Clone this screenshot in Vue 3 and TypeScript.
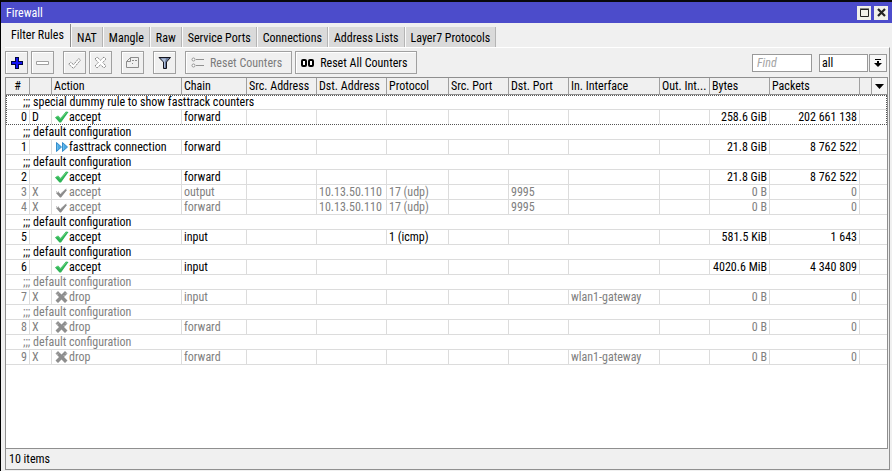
<script setup lang="ts">
import { ref } from 'vue'

interface Column {
  key: string
  label: string
  cls: string
}

interface Rule {
  id: number
  flag?: string
  comment?: string
  action: 'accept' | 'drop' | 'fasttrack connection'
  chain: string
  dst?: string
  protocol?: string
  dstPort?: string
  inIf?: string
  bytes: string
  packets: string
}

const tabs = ['Filter Rules', 'NAT', 'Mangle', 'Raw', 'Service Ports', 'Connections', 'Address Lists', 'Layer7 Protocols']
const activeTab = ref('Filter Rules')
const find = ref('')
const scope = ref('all')
const selected = ref(0)
const scopeSelect = ref<HTMLSelectElement | null>(null)

const columns: Column[] = [
  { key: 'id', label: '#', cls: 'c-id' },
  { key: 'flag', label: '', cls: 'c-flag' },
  { key: 'action', label: 'Action', cls: 'c-action' },
  { key: 'chain', label: 'Chain', cls: 'c-chain' },
  { key: 'src', label: 'Src. Address', cls: 'c-addr' },
  { key: 'dst', label: 'Dst. Address', cls: 'c-addr' },
  { key: 'protocol', label: 'Protocol', cls: 'c-proto' },
  { key: 'srcPort', label: 'Src. Port', cls: 'c-port' },
  { key: 'dstPort', label: 'Dst. Port', cls: 'c-port' },
  { key: 'inIf', label: 'In. Interface', cls: 'c-in' },
  { key: 'outIf', label: 'Out. Int...', cls: 'c-out' },
  { key: 'bytes', label: 'Bytes', cls: 'c-bytes' },
  { key: 'packets', label: 'Packets', cls: 'c-packets' },
  { key: 'spare', label: '', cls: 'c-spare' },
]

const note = 'default configuration'
const rules: Rule[] = [
  { id: 0, flag: 'D', comment: 'special dummy rule to show fasttrack counters', action: 'accept', chain: 'forward', bytes: '258.6 GiB', packets: '202 661 138' },
  { id: 1, comment: note, action: 'fasttrack connection', chain: 'forward', bytes: '21.8 GiB', packets: '8 762 522' },
  { id: 2, comment: note, action: 'accept', chain: 'forward', bytes: '21.8 GiB', packets: '8 762 522' },
  { id: 3, flag: 'X', action: 'accept', chain: 'output', dst: '10.13.50.110', protocol: '17 (udp)', dstPort: '9995', bytes: '0 B', packets: '0' },
  { id: 4, flag: 'X', action: 'accept', chain: 'forward', dst: '10.13.50.110', protocol: '17 (udp)', dstPort: '9995', bytes: '0 B', packets: '0' },
  { id: 5, comment: note, action: 'accept', chain: 'input', protocol: '1 (icmp)', bytes: '581.5 KiB', packets: '1 643' },
  { id: 6, comment: note, action: 'accept', chain: 'input', bytes: '4020.6 MiB', packets: '4 340 809' },
  { id: 7, flag: 'X', comment: note, action: 'drop', chain: 'input', inIf: 'wlan1-gateway', bytes: '0 B', packets: '0' },
  { id: 8, flag: 'X', comment: note, action: 'drop', chain: 'forward', bytes: '0 B', packets: '0' },
  { id: 9, flag: 'X', comment: note, action: 'drop', chain: 'forward', inIf: 'wlan1-gateway', bytes: '0 B', packets: '0' },
]

function openScope() {
  scopeSelect.value?.showPicker()
}
</script>

<template>
  <main class="window">
    <header class="titlebar">
      <h1>Firewall</h1>
      <button class="winbtn" aria-label="Maximize">
        <svg width="9" height="9" viewBox="0 0 9 9"><path d="M.5 1.5h8v7h-8zM0 1h9" fill="none" stroke="#222" /></svg>
      </button>
      <button class="winbtn" aria-label="Close">
        <svg width="9" height="9" viewBox="0 0 9 9"><path d="M1 1l7 7M8 1l-7 7" stroke="#222" stroke-width="2.2" /></svg>
      </button>
    </header>

    <nav class="tabs" role="tablist">
      <button
        v-for="t in tabs"
        :key="t"
        role="tab"
        class="tab"
        :class="{ active: t === activeTab }"
        :aria-selected="t === activeTab"
        @click="activeTab = t"
      >{{ t }}</button>
    </nav>

    <section class="page">
      <div class="toolbar">
        <button class="tool" aria-label="Add">
          <svg width="13" height="13" viewBox="0 0 13 13"><path d="M5 1h4v4h4v4H9v4H5V9H1V5h4z" fill="#00063c" /><path d="M6 2h2v4h4v2H8v4H6V8H2V6h4z" fill="#1414f4" /></svg>
        </button>
        <button class="tool" aria-label="Remove">
          <svg width="13" height="13" viewBox="0 0 13 13"><path d="M.5 5.500h12v3H.5z" fill="#fff" stroke="#a0a0a0" /></svg>
        </button>
        <button class="tool gap" aria-label="Enable">
          <svg width="13" height="13" viewBox="0 0 13 13"><path d="M.8 8.200l2-2 2.700 2.500L10.700 2.500l1.800 1.600-7 8.300z" fill="#fff" stroke="#808080" stroke-dasharray="1.500 .7" /></svg>
        </button>
        <button class="tool" aria-label="Disable">
          <svg width="13" height="13" viewBox="0 0 13 13"><path d="M1 3l2-2 3.500 3.200L10 1l2 2-3.200 3.500L12 10l-2 2-3.500-3.200L3 12l-2-2 3.200-3.500z" fill="#fff" stroke="#808080" stroke-dasharray="1.500 .7" /></svg>
        </button>
        <button class="tool gap" aria-label="Comment">
          <svg width="13" height="13" viewBox="0 0 13 13"><path d="M4.500 1.500h8v10H.5v-6zM.5 5.500h4v-4M6 4.500h2M9 4.500h2M6 7.500h1" fill="none" stroke="#8c8c8c" /></svg>
        </button>
        <button class="tool gap" aria-label="Filter">
          <svg width="13" height="13" viewBox="0 0 13 13">
            <path d="M1 1.500h11.500L8.500 6v6.500h-3V6z" fill="#6b7c9e" stroke="#15151d" />
            <path d="M3 2.500h5L7 6v5.500H6V6z" fill="#b0c0da" />
          </svg>
        </button>
        <button class="tool wide gap muted">
          <svg width="13" height="13" viewBox="0 0 13 13"><path d="M5 3.500h8M5 9.500h8" stroke="#929292" /><circle cx="2.500" cy="3.500" r="1.500" fill="#fff" stroke="#929292" /><circle cx="2.500" cy="9.500" r="1.500" fill="#fff" stroke="#929292" /></svg>
          <span>Reset Counters</span>
        </button>
        <button class="tool wide">
          <svg width="13" height="13" viewBox="0 0 13 13"><rect x="1" y="4" width="4" height="6" rx="1" fill="#fff" stroke="#000" stroke-width="2" /><rect x="8" y="4" width="4" height="6" rx="1" fill="#fff" stroke="#000" stroke-width="2" /></svg>
          <span>Reset All Counters</span>
        </button>
        <input v-model="find" class="find" type="text" placeholder="Find" aria-label="Find" />
        <select ref="scopeSelect" v-model="scope" class="scope" aria-label="Rule scope">
          <option>all</option>
          <option>dynamic</option>
          <option>static</option>
        </select>
        <button class="drop" aria-label="Open scope list" @click="openScope">
          <svg width="8" height="8" viewBox="0 0 8 8"><path d="M1 0h6v1H1zM3 2h2v2h3L4 8 0 4h3z" fill="#000" /></svg>
        </button>
      </div>

      <div class="list">
        <table>
          <thead>
            <tr>
              <th v-for="c in columns" :key="c.key" :class="c.cls" scope="col">{{ c.label }}</th>
              <th class="c-menu" scope="col">
                <button class="colmenu" aria-label="Choose columns">
                  <svg width="9" height="5" viewBox="0 0 9 5"><path d="M0 0h9L4.500 5z" fill="#000" /></svg>
                </button>
              </th>
            </tr>
          </thead>
          <tbody
            v-for="r in rules"
            :key="r.id"
            :class="{ off: r.flag === 'X', focused: r.id === selected }"
            @click="selected = r.id"
          >
            <tr v-if="r.comment">
              <td class="comment" colspan="15">;;; {{ r.comment }}</td>
            </tr>
            <tr>
              <td class="num">{{ r.id }}</td>
              <td>{{ r.flag }}</td>
              <td class="action">
                <svg v-if="r.action === 'accept' && r.flag !== 'X'" width="15" height="14" viewBox="0 0 15 14">
                  <path d="M1 7.500l3-2 2.500 2.500L12 1.500l2.500.5L7 12.500H5.500z" fill="#2fb457" />
                  <path d="M2.500 7.200L4 6.300 6.500 9 12.500 2.300" fill="none" stroke="#62d67c" />
                </svg>
                <svg v-else-if="r.action === 'accept'" width="15" height="14" viewBox="0 0 15 14">
                  <path d="M2 8l2.500-1 2 2L11.500 4l1.500 1-6 7.500H6z" fill="#8b8b8b" />
                  <path d="M7 8.500L12.500 3.500M2 7l2.500-.5" stroke="#a5a5a5" stroke-dasharray="1 1" />
                </svg>
                <svg v-else-if="r.action === 'drop'" width="15" height="14" viewBox="0 0 15 14">
                  <path d="M1.500 3.500L4 1l3.500 3.500L11 1l2.500 2.500L10 7l3.500 3.500L11 13 7.500 9.500 4 13l-2.500-2.500L5 7z" fill="#8e8e8e" />
                  <path d="M2 3.500L4.500 1M3.500 4.500L6 2M11.500 3L13 4.500M9.500 5l1.500 1.500" stroke="#d8d8d8" stroke-dasharray="1 1" />
                </svg>
                <svg v-else width="15" height="14" viewBox="0 0 15 14">
                  <path d="M2.500 2.500L7.500 7l-5 4.500zM8.500 2.500L13.500 7l-5 4.500z" fill="#4aa9e4" stroke="#348dcb" />
                  <path d="M3.500 4.500v5M9.500 4.500v5" stroke="#6dbdec" />
                </svg>
                <span>{{ r.action }}</span>
              </td>
              <td>{{ r.chain }}</td>
              <td></td>
              <td>{{ r.dst }}</td>
              <td>{{ r.protocol }}</td>
              <td></td>
              <td>{{ r.dstPort }}</td>
              <td>{{ r.inIf }}</td>
              <td></td>
              <td class="num">{{ r.bytes }}</td>
              <td class="num">{{ r.packets }}</td>
              <td class="last" colspan="2"></td>
            </tr>
          </tbody>
        </table>
      </div>

      <footer class="status">{{ rules.length }} items</footer>
    </section>
  </main>
</template>

<style>
body {
  background: #f0f0f0;
}
</style>

<style scoped>
.window {
  box-sizing: border-box;
  min-height: 100vh;
  display: flex;
  flex-direction: column;
  padding-bottom: 1px;
  border-top: 2px solid #08080c;
  border-left: 1px solid #000;
  background: #f0f0f0;
  color: #000;
  font-family: "Roboto Condensed", Roboto, "Liberation Sans", sans-serif;
  font-size: 12px;
  line-height: 14px;
}

button,
input,
select {
  box-sizing: border-box;
  margin: 0;
  padding: 0;
  border: 0;
  border-radius: 0;
  font: inherit;
  color: inherit;
}

svg {
  display: block;
  flex: none;
}

.titlebar {
  display: flex;
  align-items: center;
  gap: 3px;
  height: 21px;
  padding: 0 4px 0 5px;
  background: #4c4ccb;
}

h1 {
  flex: 1;
  margin: 0;
  color: #fff;
  font-size: 12px;
  font-weight: normal;
}

.winbtn {
  display: flex;
  align-items: center;
  justify-content: center;
  width: 14px;
  height: 14px;
  background: #f0f0ea;
}

.tabs {
  display: flex;
  align-items: flex-end;
  height: 24px;
  padding-left: 4px;
}

.tab {
  height: 20px;
  padding: 1px 5px 0 5px;
  border-right: 1px solid #b4b4b4;
  border-left: 1px solid #fafafa;
  background: #dadada;
  white-space: nowrap;
}

.tab.active {
  height: 23px;
  padding: 0 6px 2px 6px;
  border-right-color: #8c8c8c;
  border-left: 0;
  background: #f0f0f0;
}

.page {
  flex: 1;
  display: flex;
  flex-direction: column;
  margin: 0 2px 0 4px;
  padding-right: 1px;
  border-top: 1px solid #fff;
  border-right: 1px solid #909090;
  border-bottom: 1px solid #909090;
}

.toolbar {
  display: flex;
  align-items: center;
  gap: 3px;
  padding: 3px 1px 3px 0;
}

.tool {
  display: flex;
  align-items: center;
  justify-content: center;
  gap: 6px;
  width: 23px;
  height: 23px;
  border: 1px solid #a0a0a0;
  background: #f0f0f0;
  box-shadow: inset 1px 1px #fff;
  white-space: nowrap;
}

.tool.gap {
  margin-left: 6px;
}

.tool.wide {
  width: auto;
  padding: 0 9px 0 5px;
}

.muted {
  color: #7c7c7c;
}

.find,
.scope {
  height: 18px;
  border: 1px solid #999;
  background: #fff;
}

.find {
  width: 60px;
  margin-left: auto;
  padding-left: 4px;
}

.find::placeholder {
  color: #a4a4a4;
  font-style: italic;
}

.scope {
  width: 49px;
  margin-left: 4px;
  padding-left: 2px;
  appearance: none;
}

.drop {
  display: flex;
  align-items: center;
  justify-content: center;
  width: 18px;
  height: 18px;
  margin-left: -2px;
  border: 1px solid #999;
  background: #f6f6f6;
}

.list {
  flex: 1;
  border: 1px solid #8f8f8f;
  background: #fff;
}

table {
  width: 100%;
  table-layout: fixed;
  border-spacing: 0;
}

th,
td {
  box-sizing: border-box;
  padding: 0 2px;
  overflow: hidden;
  white-space: nowrap;
  text-align: left;
  font-weight: normal;
}

th {
  height: 17px;
  padding: 0 0 0 2px;
  border-right: 1px solid #a0a0a0;
  border-bottom: 1px solid #8f8f8f;
  background: #f0f0f0;
}

td {
  height: 15px;
  border-right: 1px solid #dcdcdc;
  border-bottom: 1px solid #dcdcdc;
}

.c-id { width: 24px; padding: 0; text-align: center; }
.c-flag { width: 22px; }
.c-action { width: 130px; }
.c-chain { width: 65px; }
.c-addr { width: 70px; }
.c-proto { width: 62px; }
.c-port { width: 60px; }
.c-out { width: 50px; }
.c-bytes { width: 60px; }
.c-packets { width: 90px; }
.c-spare { width: 12px; }
.c-menu { width: 15px; padding: 0; border-right: 0; }

.colmenu {
  display: flex;
  align-items: center;
  justify-content: center;
  width: 100%;
  height: 16px;
  background: #f4f4f4;
}

.comment {
  padding-left: 17px;
  border-right: 0;
}

.num {
  text-align: right;
}

.last {
  border-right: 0;
}

.action svg {
  float: left;
}

.off td {
  color: #808080;
}

.focused {
  outline: 1px dotted #555;
  outline-offset: -1px;
}

.focused tr:last-child td {
  border-bottom-color: transparent;
}

.status {
  padding: 3px;
  border-left: 1px solid #909090;
}
</style>
